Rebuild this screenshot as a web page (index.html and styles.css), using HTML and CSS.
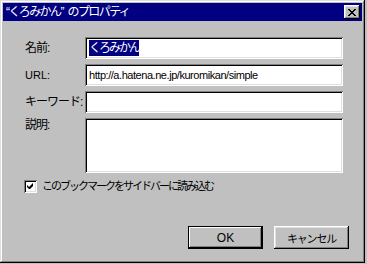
FILE: index.html
```html
<!DOCTYPE html>
<html lang="ja">

<head>
    <meta charset="UTF-8">
    <title>“くろみかん” のプロパティ</title>
    <link rel="stylesheet" href="styles.css">
</head>

<body>
    <div class="window">
        <div class="titlebar">
            <span class="title">“くろみかん” のプロパティ</span>
            <button class="close" type="button">
                <svg width="8" height="7" viewBox="0 0 8 7">
                    <path d="M0 0h2v1h-2zM6 0h2v1h-2zM1 1h2v1h-2zM5 1h2v1h-2zM2 2h4v1h-4zM3 3h2v1h-2zM2 4h4v1h-4zM1 5h2v1h-2zM5 5h2v1h-2zM0 6h2v1h-2zM6 6h2v1h-2z" fill="#000"/>
                </svg>
            </button>
        </div>

        <div class="content">
            <div class="fields">
                <label class="label">名前:</label>
                <div class="field"><span class="selected">くろみかん</span></div>

                <label class="label label-latin">URL:</label>
                <div class="field field-latin">http://a.hatena.ne.jp/kuromikan/simple</div>

                <label class="label">キーワード:</label>
                <div class="field"></div>

                <label class="label label-top">説明:</label>
                <div class="field field-tall"></div>
            </div>

            <div class="check">
                <span class="box">
                    <svg width="7" height="7" viewBox="0 0 7 7">
                        <path d="M6 0v3l-3 3h-1l-2-2v-2l2 2z" fill="#000"/>
                    </svg>
                </span>
                <span class="check-text">このブックマークをサイドバーに読み込む</span>
            </div>

            <div class="buttons">
                <button class="btn btn-default" type="button">OK</button>
                <button class="btn btn-ja" type="button">キャンセル</button>
            </div>
        </div>
    </div>
</body>

</html>
```

FILE: styles.css
```css
body {
    margin: 0;
    background: #c0c0c0;
    font-family: "Liberation Sans", "Noto Sans CJK JP", sans-serif;
    font-size: 12px;
    color: #000;
}

.window {
    width: 365px;
    height: 263px;
    box-sizing: border-box;
    padding: 3px;
    background: #c0c0c0;
    box-shadow: inset -1px -1px #000, inset 1px 1px #dfdfdf,
        inset -2px -2px #808080, inset 2px 2px #fff;
}

.titlebar {
    height: 18px;
    background: #000080;
    color: #fff;
    display: flex;
    align-items: center;
    justify-content: space-between;
    padding: 0 2px 0 3px;
}

.title {
    line-height: 18px;
    letter-spacing: -1.6px;
    word-spacing: 3px;
}

.close {
    width: 16px;
    height: 14px;
    padding: 0;
    border: none;
    background: #c0c0c0;
    display: flex;
    align-items: center;
    justify-content: center;
    box-shadow: inset -1px -1px #000, inset 1px 1px #fff,
        inset -2px -2px #808080, inset 2px 2px #dfdfdf;
}

.close svg {
    display: block;
    margin-left: -1px;
}

.content {
    padding: 16px 0 0 22px;
}

.fields {
    display: grid;
    grid-template-columns: 60px 258px;
    row-gap: 5px;
}

.label {
    line-height: 22px;
    letter-spacing: -1px;
}

.label-latin {
    font-size: 11px;
    letter-spacing: 0;
}

.label-top {
    line-height: 14px;
}

.field {
    height: 22px;
    box-sizing: border-box;
    background: #fff;
    padding: 0 4px;
    line-height: 22px;
    white-space: nowrap;
    box-shadow: inset 1px 1px #808080, inset -1px -1px #fff,
        inset 2px 2px #000, inset -2px -2px #dfdfdf;
}

.field-latin {
    font-size: 11px;
    letter-spacing: -0.45px;
}

.field-tall {
    height: 55px;
}

.selected {
    background: #000080;
    color: #fff;
    padding: 1px 0;
    letter-spacing: -2px;
}

.check {
    display: flex;
    align-items: center;
    gap: 5px;
    margin: 6px 0 0 -1px;
    line-height: 14px;
}

.check-text {
    font-size: 11px;
    letter-spacing: -2px;
}

.box {
    width: 13px;
    height: 13px;
    box-sizing: border-box;
    background: #fff;
    display: flex;
    align-items: center;
    justify-content: center;
    box-shadow: inset 1px 1px #808080, inset -1px -1px #fff,
        inset 2px 2px #000, inset -2px -2px #dfdfdf;
}

.buttons {
    display: flex;
    gap: 11px;
    margin: 33px 0 0 163px;
}

.btn {
    width: 75px;
    height: 23px;
    padding: 0;
    border: none;
    background: #c0c0c0;
    font: inherit;
    color: #000;
    box-shadow: inset -1px -1px #000, inset 1px 1px #fff,
        inset -2px -2px #808080, inset 2px 2px #dfdfdf;
}

.btn-ja {
    font-size: 11px;
    letter-spacing: -1.2px;
}

.btn-default {
    box-shadow: inset 0 0 0 1px #000, inset -2px -2px #000,
        inset 2px 2px #fff, inset -3px -3px #808080;
}
```
